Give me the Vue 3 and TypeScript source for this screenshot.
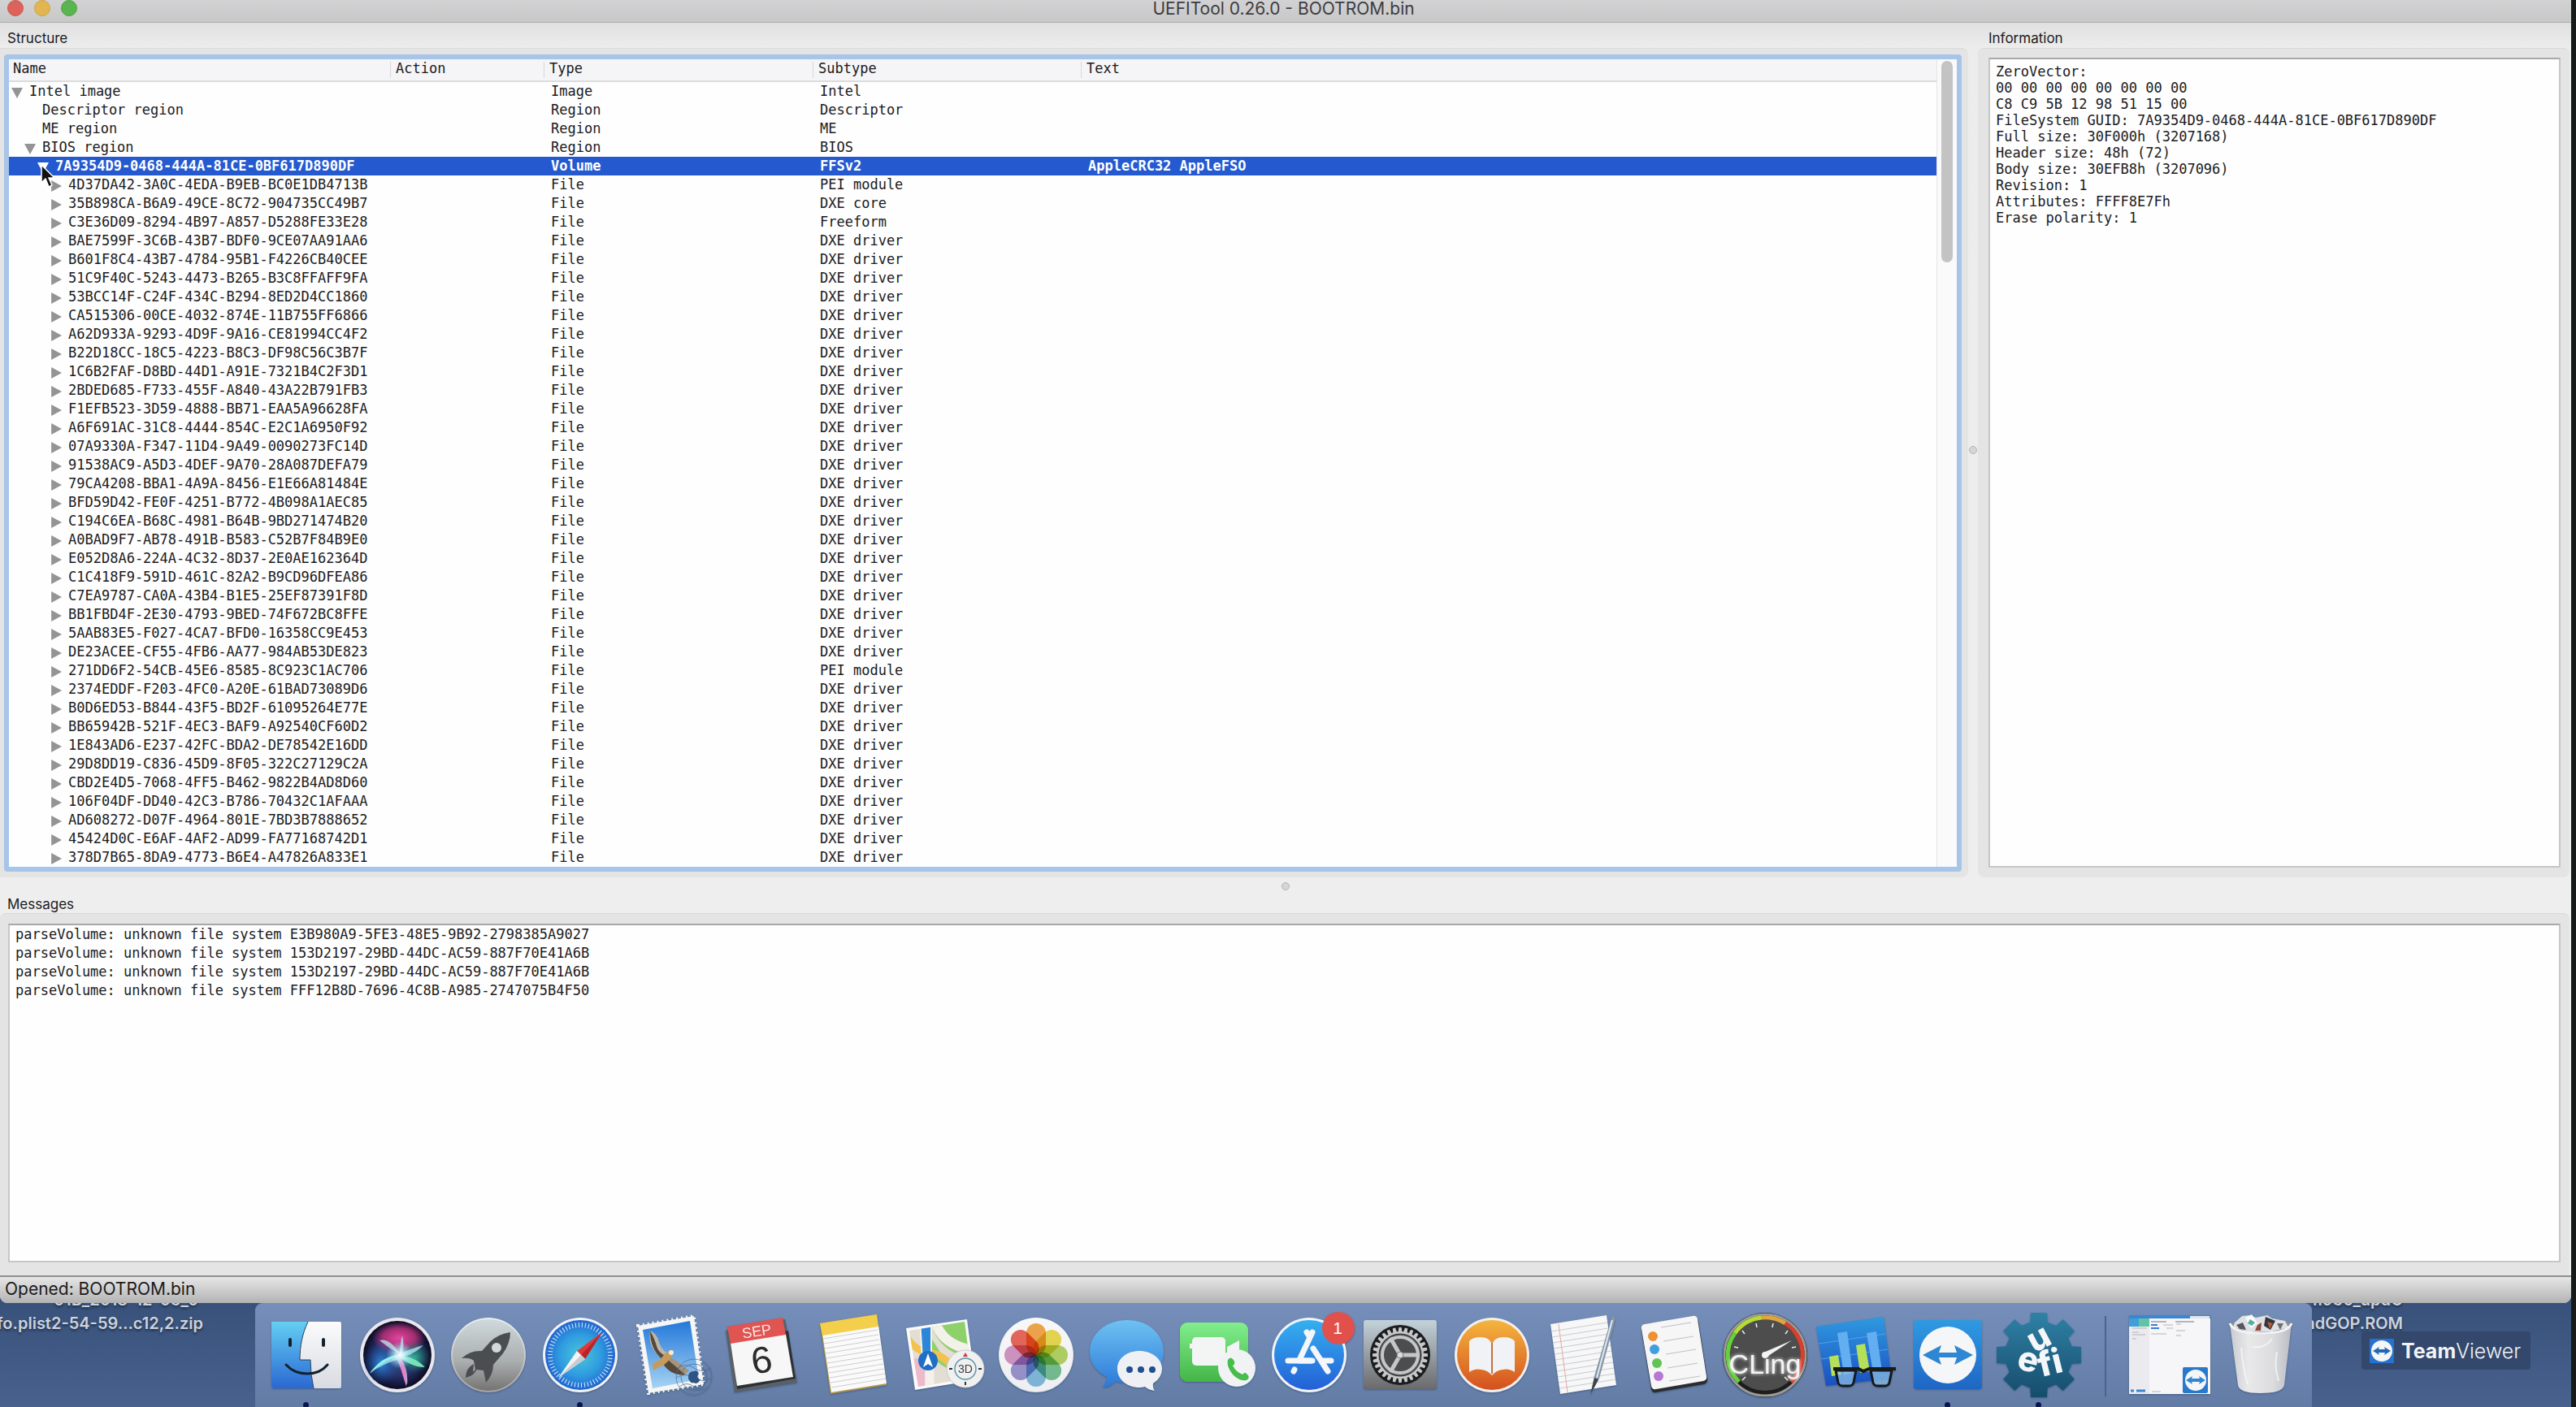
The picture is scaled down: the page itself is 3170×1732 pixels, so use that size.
<script setup lang="ts">
interface TreeRow {
  level: number
  name: string
  type: string
  subtype: string
  text?: string
  state: 'open' | 'closed' | 'leaf'
  selected?: boolean
}

const fileGuids: string[] = [
  '4D37DA42-3A0C-4EDA-B9EB-BC0E1DB4713B',
  '35B898CA-B6A9-49CE-8C72-904735CC49B7',
  'C3E36D09-8294-4B97-A857-D5288FE33E28',
  'BAE7599F-3C6B-43B7-BDF0-9CE07AA91AA6',
  'B601F8C4-43B7-4784-95B1-F4226CB40CEE',
  '51C9F40C-5243-4473-B265-B3C8FFAFF9FA',
  '53BCC14F-C24F-434C-B294-8ED2D4CC1860',
  'CA515306-00CE-4032-874E-11B755FF6866',
  'A62D933A-9293-4D9F-9A16-CE81994CC4F2',
  'B22D18CC-18C5-4223-B8C3-DF98C56C3B7F',
  '1C6B2FAF-D8BD-44D1-A91E-7321B4C2F3D1',
  '2BDED685-F733-455F-A840-43A22B791FB3',
  'F1EFB523-3D59-4888-BB71-EAA5A96628FA',
  'A6F691AC-31C8-4444-854C-E2C1A6950F92',
  '07A9330A-F347-11D4-9A49-0090273FC14D',
  '91538AC9-A5D3-4DEF-9A70-28A087DEFA79',
  '79CA4208-BBA1-4A9A-8456-E1E66A81484E',
  'BFD59D42-FE0F-4251-B772-4B098A1AEC85',
  'C194C6EA-B68C-4981-B64B-9BD271474B20',
  'A0BAD9F7-AB78-491B-B583-C52B7F84B9E0',
  'E052D8A6-224A-4C32-8D37-2E0AE162364D',
  'C1C418F9-591D-461C-82A2-B9CD96DFEA86',
  'C7EA9787-CA0A-43B4-B1E5-25EF87391F8D',
  'BB1FBD4F-2E30-4793-9BED-74F672BC8FFE',
  '5AAB83E5-F027-4CA7-BFD0-16358CC9E453',
  'DE23ACEE-CF55-4FB6-AA77-984AB53DE823',
  '271DD6F2-54CB-45E6-8585-8C923C1AC706',
  '2374EDDF-F203-4FC0-A20E-61BAD73089D6',
  'B0D6ED53-B844-43F5-BD2F-61095264E77E',
  'BB65942B-521F-4EC3-BAF9-A92540CF60D2',
  '1E843AD6-E237-42FC-BDA2-DE78542E16DD',
  '29D8DD19-C836-45D9-8F05-322C27129C2A',
  'CBD2E4D5-7068-4FF5-B462-9822B4AD8D60',
  '106F04DF-DD40-42C3-B786-70432C1AFAAA',
  'AD608272-D07F-4964-801E-7BD3B7888652',
  '45424D0C-E6AF-4AF2-AD99-FA77168742D1',
  '378D7B65-8DA9-4773-B6E4-A47826A833E1',
]

const specialSubtypes: Record<number, string> = { 0: 'PEI module', 1: 'DXE core', 2: 'Freeform', 26: 'PEI module' }

const rows: TreeRow[] = [
  { level: 0, name: 'Intel image', type: 'Image', subtype: 'Intel', state: 'open' },
  { level: 1, name: 'Descriptor region', type: 'Region', subtype: 'Descriptor', state: 'leaf' },
  { level: 1, name: 'ME region', type: 'Region', subtype: 'ME', state: 'leaf' },
  { level: 1, name: 'BIOS region', type: 'Region', subtype: 'BIOS', state: 'open' },
  {
    level: 2,
    name: '7A9354D9-0468-444A-81CE-0BF617D890DF',
    type: 'Volume',
    subtype: 'FFSv2',
    text: 'AppleCRC32 AppleFSO',
    state: 'open',
    selected: true,
  },
  ...fileGuids.map((name, i): TreeRow => ({
    level: 3,
    name,
    type: 'File',
    subtype: specialSubtypes[i] ?? 'DXE driver',
    state: 'closed',
  })),
]

const information = [
  'ZeroVector:',
  '00 00 00 00 00 00 00 00',
  'C8 C9 5B 12 98 51 15 00',
  'FileSystem GUID: 7A9354D9-0468-444A-81CE-0BF617D890DF',
  'Full size: 30F000h (3207168)',
  'Header size: 48h (72)',
  'Body size: 30EFB8h (3207096)',
  'Revision: 1',
  'Attributes: FFFF8E7Fh',
  'Erase polarity: 1',
].join('\n')

const messages: string[] = [
  'E3B980A9-5FE3-48E5-9B92-2798385A9027',
  '153D2197-29BD-44DC-AC59-887F70E41A6B',
  '153D2197-29BD-44DC-AC59-887F70E41A6B',
  'FFF12B8D-7696-4C8B-A985-2747075B4F50',
].map((guid) => `parseVolume: unknown file system ${guid}`)

function gearPath(cx: number, cy: number, outer: number, inner: number, teeth: number, top: number, base: number): string {
  const points: string[] = []
  for (let i = 0; i < teeth; i++) {
    const a = (i / teeth) * Math.PI * 2 - Math.PI / 2
    const corners: [number, number][] = [[-base, inner], [-top, outer], [top, outer], [base, inner]]
    for (const [offset, r] of corners) {
      points.push(`${(cx + Math.cos(a + offset) * r).toFixed(1)} ${(cy + Math.sin(a + offset) * r).toFixed(1)}`)
    }
  }
  return `M${points.join('L')}Z`
}

const uefiGear = gearPath(56, 64, 53, 42, 8, 0.19, 0.26)
const prefsGear = gearPath(56, 64, 34, 29, 28, 0.05, 0.08)

const petals: string[] = ['#f39a2e', '#e8d532', '#a9cf4a', '#63b984', '#6fb4dc', '#8d86c8', '#cf86bd', '#e8503f']
const noteLines: number[] = Array.from({ length: 11 }, (_, i) => i)
const perforations = '2 4'
</script>

<template>
  <div class="screen">
    <main class="window">
      <header class="titlebar">
        <div class="lights">
          <button class="light red" type="button" aria-label="Close"></button>
          <button class="light yellow" type="button" aria-label="Minimise"></button>
          <button class="light green" type="button" aria-label="Zoom"></button>
        </div>
        <h1>UEFITool 0.26.0 - BOOTROM.bin</h1>
      </header>

      <div class="panes">
        <section class="pane structure" aria-label="Structure">
          <h2>Structure</h2>
          <div class="group tree-group">
            <div class="tree">
              <div class="tree-view">
                <table>
                  <colgroup>
                    <col class="col-name" />
                    <col class="col-action" />
                    <col class="col-type" />
                    <col class="col-subtype" />
                    <col />
                  </colgroup>
                  <thead>
                    <tr>
                      <th scope="col">Name</th>
                      <th scope="col">Action</th>
                      <th scope="col">Type</th>
                      <th scope="col">Subtype</th>
                      <th scope="col">Text</th>
                    </tr>
                  </thead>
                  <tbody>
                    <tr v-for="row in rows" :key="row.name" :class="{ selected: row.selected }">
                      <td>
                        <div class="name" :class="'level-' + row.level">
                          <button
                            v-if="row.state !== 'leaf'"
                            class="disclosure"
                            :class="row.state"
                            type="button"
                            :aria-label="row.state === 'open' ? 'Collapse' : 'Expand'"
                          ></button>
                          <span v-else class="disclosure"></span>
                          <span>{{ row.name }}</span>
                          <svg v-if="row.selected" class="pointer" viewBox="0 0 20 30" aria-hidden="true">
                            <path d="M2 1V23L7 18L11 28L15 26L11 17H18Z" fill="#111" stroke="#fff" stroke-width="1.5" />
                          </svg>
                        </div>
                      </td>
                      <td></td>
                      <td>{{ row.type }}</td>
                      <td>{{ row.subtype }}</td>
                      <td>{{ row.text }}</td>
                    </tr>
                  </tbody>
                </table>
              </div>
              <div class="scroll-lane"><div class="thumb"></div></div>
            </div>
          </div>
        </section>

        <div class="splitter vertical"><span class="grip"></span></div>

        <section class="pane information">
          <h2><label for="info">Information</label></h2>
          <div class="group info-group">
            <textarea id="info" readonly :value="information"></textarea>
          </div>
        </section>
      </div>

      <div class="splitter horizontal"><span class="grip"></span></div>

      <section class="messages" aria-label="Messages">
        <h2>Messages</h2>
        <div class="group message-group">
          <ul>
            <li v-for="(message, i) in messages" :key="i">{{ message }}</li>
          </ul>
        </div>
      </section>

      <footer class="status">Opened: BOOTROM.bin</footer>
    </main>

    <div class="desktop">
      <div class="files left-files">
        <p class="peek">01B_2018-12-05_0</p>
        <p class="file-row"><span>fo.plist</span><span>2-54-59…c12,2.zip</span></p>
      </div>

      <nav class="dock" aria-label="Dock">
        <div class="apps">
          <button class="app running" type="button" aria-label="Finder">
            <svg viewBox="0 0 112 129">
              <defs>
                <linearGradient id="finderBlue" x2="0" y2="1"><stop stop-color="#63cff3" /><stop offset="1" stop-color="#2b68d2" /></linearGradient>
                <linearGradient id="paper" x2="0" y2="1"><stop stop-color="#fbfbfc" /><stop offset="1" stop-color="#d8dbe2" /></linearGradient>
              </defs>
              <rect x="13" y="23" width="86" height="82" rx="2" fill="url(#paper)" />
              <path d="M15 23H58C51 38 48 53 48 70H61Q61 88 65 105H15Q13 105 13 103V25Q13 23 15 23Z" fill="url(#finderBlue)" />
              <path d="M58 23C51 38 48 53 48 70H61Q61 88 65 105" fill="none" stroke="#2b3f5c" stroke-width="1" />
              <path d="M36 45V52M77 45V52" stroke="#14202e" stroke-width="4" stroke-linecap="round" />
              <path d="M31 76Q41 87 57 87T82 76" fill="none" stroke="#14202e" stroke-width="3" stroke-linecap="round" />
            </svg>
          </button>

          <button class="app" type="button" aria-label="Siri">
            <svg viewBox="0 0 112 129">
              <defs>
                <radialGradient id="siriBase"><stop stop-color="#3d5a8c" /><stop offset=".6" stop-color="#27316a" /><stop offset="1" stop-color="#0b0b22" /></radialGradient>
                <radialGradient id="siriPink"><stop stop-color="#e8439f" /><stop offset=".6" stop-color="#c03078" stop-opacity=".8" /><stop offset="1" stop-color="#b42a6a" stop-opacity="0" /></radialGradient>
                <radialGradient id="siriBlue"><stop stop-color="#2b8ad8" /><stop offset="1" stop-color="#1c4fa8" stop-opacity="0" /></radialGradient>
                <radialGradient id="siriTeal"><stop stop-color="#2fae94" /><stop offset="1" stop-color="#1f7f6a" stop-opacity="0" /></radialGradient>
                <radialGradient id="siriGlow"><stop stop-color="#fff" /><stop offset=".3" stop-color="#d8fbff" stop-opacity=".8" /><stop offset="1" stop-color="#8df" stop-opacity="0" /></radialGradient>
              </defs>
              <circle cx="56" cy="64" r="46" fill="#e9e7ee" />
              <circle cx="56" cy="64" r="42" fill="url(#siriBase)" />
              <ellipse cx="58" cy="43" rx="33" ry="20" fill="url(#siriPink)" />
              <ellipse cx="36" cy="74" rx="23" ry="27" fill="url(#siriBlue)" />
              <ellipse cx="77" cy="67" rx="20" ry="20" fill="url(#siriTeal)" />
              <path d="M59 63Q46 56 34 46Q47 43 59 63Q59 50 62 40Q65 52 62 61Q76 55 88 52Q78 62 64 66Q76 66 89 79Q74 78 60 68Q70 82 68 101Q62 84 56 70Q40 74 22 86Q34 70 59 63Z" fill="#b9e9f0" opacity=".75" />
              <path d="M59 65Q69 82 67 103Q61 84 57 69Z" fill="#ef7ec6" />
              <path d="M56 66Q40 70 22 87Q36 66 56 64Z" fill="#8af3e8" />
              <path d="M63 66Q78 66 90 79Q76 79 62 69Z" fill="#6de7b2" opacity=".8" />
              <circle cx="59" cy="64" r="17" fill="url(#siriGlow)" />
            </svg>
          </button>

          <button class="app" type="button" aria-label="Launchpad">
            <svg viewBox="0 0 112 129">
              <defs>
                <linearGradient id="launch" x2="0" y2="1"><stop stop-color="#cfd9dc" /><stop offset=".6" stop-color="#a9adae" /><stop offset="1" stop-color="#757372" /></linearGradient>
                <linearGradient id="launchRim" x2="0" y2="1"><stop stop-color="#e9f0f2" /><stop offset="1" stop-color="#a3a3a4" /></linearGradient>
              </defs>
              <circle cx="56" cy="64" r="46" fill="url(#launchRim)" />
              <circle cx="56" cy="64" r="44" fill="url(#launch)" />
              <path d="M83 36Q68 38 58 48L48 59Q34 58 23 68Q33 67 38 71L40 82L50 83L53 98Q62 88 62 76L74 62Q83 49 83 36Z" fill="#4b4e50" />
              <circle cx="66" cy="55" r="6" fill="#d2d9da" />
              <path d="M38 75Q28 80 28 92Q40 89 42 80L37 85Z" fill="#4b4e50" />
            </svg>
          </button>

          <button class="app running" type="button" aria-label="Safari">
            <svg viewBox="0 0 112 129">
              <defs>
                <radialGradient id="safari"><stop stop-color="#49c6d8" /><stop offset=".6" stop-color="#2f9be0" /><stop offset="1" stop-color="#2165cf" /></radialGradient>
              </defs>
              <circle cx="56" cy="64" r="46" fill="#f1f3f6" />
              <circle cx="56" cy="64" r="43" fill="url(#safari)" />
              <circle cx="56" cy="64" r="37" fill="none" stroke="#d9ecf8" stroke-width="6" stroke-dasharray="1 3" />
              <path d="M83 36L52 59L62 69Z" fill="#e0383a" />
              <path d="M83 36L57 64L62 69Z" fill="#b92429" />
              <path d="M29 92L52 59L62 69Z" fill="#f4f4f4" />
              <path d="M29 92L57 64L62 69Z" fill="#c9cdd1" />
            </svg>
          </button>

          <button class="app" type="button" aria-label="Mail">
            <svg viewBox="0 0 112 129">
              <defs>
                <linearGradient id="sky" x2="0" y2="1"><stop stop-color="#2378da" /><stop offset="1" stop-color="#a6d3f2" /></linearGradient>
              </defs>
              <path d="M15 28L84 16L96 100L28 111Z" fill="#f6f6f6" stroke="#f6f6f6" stroke-width="4" :stroke-dasharray="perforations" />
              <path d="M21 33L79 22L90 94L33 105Z" fill="url(#sky)" />
              <path d="M30 34Q38 37 41 48Q43 56 51 62L46 70Q33 60 30 48Q29 40 30 34Z" fill="#bdb6a9" />
              <path d="M30 34Q36 45 38 53T49 65L46 70Q30 58 30 34Z" fill="#57493a" />
              <path d="M51 66Q60 68 66 74L78 83L72 89Q58 89 48 72Z" fill="#a5937c" />
              <path d="M52 70L73 88Q56 90 46 75Z" fill="#57493a" />
              <path d="M54 59Q60 63 55 68Q49 76 43 78L34 83L33 74Q41 72 47 64Q50 59 54 59Z" fill="#c59b5c" />
              <circle cx="56" cy="61" r="3" fill="#f5ead2" />
              <g fill="none" stroke="#506d91" opacity=".75"><circle cx="84" cy="91" r="22" /><circle cx="84" cy="91" r="16" /><path d="M64 80Q74 73 84 80T105 80M62 92Q73 85 84 92T106 92M66 103Q75 96 84 103T102 103" /></g>
              <path d="M84 84C90 82 91 88 88 90Q89 94 92 94Q88 101 84 98Q80 100 77 93Q76 84 84 84Z" fill="#2f5484" />
            </svg>
          </button>

          <button class="app" type="button" aria-label="Calendar">
            <svg viewBox="0 0 112 129">
              <path d="M11 34L84 20L99 98L22 110Z" fill="#596067" />
              <path d="M20 48L88 34L97 93L25 106Z" fill="#2c2f33" />
              <path d="M17 49L85 38L94 91L25 102Z" fill="#f7f7f7" />
              <path d="M13 29L81 18L85 39L17 50Z" fill="#e05452" />
              <text x="49" y="41" text-anchor="middle" transform="rotate(-9 49 34)" class="cal-month">SEP</text>
              <text x="55" y="86" text-anchor="middle" transform="rotate(-9 55 69)" class="cal-day">6</text>
            </svg>
          </button>

          <button class="app" type="button" aria-label="Notes">
            <svg viewBox="0 0 112 129">
              <path d="M15 25L85 14L97 101L28 112Z" fill="#b3954a" />
              <path d="M18 38L87 27L97 99L29 110Z" fill="#fafafa" />
              <path d="M15 25L85 14L87 29L18 40Z" fill="#f4cf4b" />
              <g stroke="#cfcfcf"><path v-for="n in noteLines" :key="n" :d="`M${19 + n} ${44 + n * 6}l67 -11`" /></g>
            </svg>
          </button>

          <button class="app" type="button" aria-label="Maps">
            <svg viewBox="0 0 112 129">
              <defs>
                <clipPath id="mapClip"><path d="M13 34L81 23L90 92L24 103Z" /></clipPath>
              </defs>
              <path d="M9 31L84 20L94 95L20 107Z" fill="#fafafa" />
              <g clip-path="url(#mapClip)">
                <rect x="8" y="18" width="90" height="92" fill="#e3ddd3" />
                <path d="M38 20H90V70L70 62Q45 50 38 20Z" fill="#8ed16b" />
                <path d="M38 40L66 84L52 76L36 62Z" fill="#8ed16b" />
                <path d="M44 20Q52 52 92 58" fill="none" stroke="#f4f1ea" stroke-width="12" />
                <path d="M8 40Q20 60 40 62T84 100" fill="none" stroke="#f3c24e" stroke-width="9" />
                <path d="M12 68H32V110H12Z" fill="#efb9cc" />
                <path d="M38 80V110" stroke="#f4f1ea" stroke-width="11" />
                <path d="M25 20H41V70H28Z" fill="#f4f1ea" />
                <path d="M27 20H39V70H30Z" fill="#2b86d9" />
              </g>
              <circle cx="36" cy="71" r="12" fill="#1f6fc4" />
              <path d="M36 62L42 79L36 75L30 79Z" fill="#fff" />
              <circle cx="82" cy="81" r="23" fill="#f0f0f1" stroke="#c9ccd2" />
              <circle cx="82" cy="81" r="13" fill="none" stroke="#5d95a8" stroke-width="1.5" />
              <path d="M82 61L85 66H79Z" fill="#d23b35" />
              <path d="M62 81H66M98 81H102M82 97V101" stroke="#333" stroke-width="2" />
              <text x="82" y="86" text-anchor="middle" class="map-mode">3D</text>
            </svg>
          </button>

          <button class="app" type="button" aria-label="Photos">
            <svg viewBox="0 0 112 129">
              <circle cx="56" cy="64" r="46" fill="url(#paper)" />
              <circle cx="56" cy="64" r="45" fill="#f7f7f8" opacity=".7" />
              <g class="petals">
                <rect v-for="(colour, i) in petals" :key="i" x="44" y="25" width="24" height="39" rx="12" :fill="colour" :transform="`rotate(${i * 45} 56 64)`" opacity=".85" />
              </g>
            </svg>
          </button>

          <button class="app" type="button" aria-label="Messages">
            <svg viewBox="0 0 112 129">
              <defs><linearGradient id="bubble" x2="0" y2="1"><stop stop-color="#6fc1f2" /><stop offset="1" stop-color="#2b79d8" /></linearGradient></defs>
              <path d="M56 21C82 21 101 38 101 60S82 98 56 98Q47 98 42 96Q36 103 26 104Q31 98 31 91C17 84 10 72 10 60C10 38 30 21 56 21Z" fill="url(#bubble)" />
              <path d="M71 59C87 59 99 69 99 81Q99 92 88 99Q87 104 90 108Q82 107 78 103Q75 104 71 104C56 104 44 94 44 81S56 59 71 59Z" fill="#eef0f4" />
              <g fill="#1f4f8f"><circle cx="59" cy="82" r="4" /><circle cx="73" cy="82" r="4" /><circle cx="87" cy="82" r="4" /></g>
            </svg>
          </button>

          <button class="app" type="button" aria-label="FaceTime">
            <svg viewBox="0 0 112 129">
              <defs><linearGradient id="face" x2="0" y2="1"><stop stop-color="#82ee8e" /><stop offset="1" stop-color="#43b546" /></linearGradient></defs>
              <rect x="9" y="24" width="84" height="73" rx="9" fill="url(#face)" />
              <rect x="24" y="42" width="41" height="35" rx="5" fill="#f3f5f4" />
              <path d="M21 50H26V56H21ZM67 54L82 46V75H67Z" fill="#f3f5f4" />
              <circle cx="79" cy="80" r="23" fill="#f1f2f4" />
              <path d="M68 70Q71 65 75 70Q78 75 74 77Q78 85 86 88Q89 84 92 88Q96 92 91 95Q83 97 74 88Q66 78 68 70Z" fill="#47bd4a" />
            </svg>
          </button>

          <button class="app" type="button" aria-label="App Store">
            <svg viewBox="0 0 112 129">
              <defs><linearGradient id="store" x2="0" y2="1"><stop stop-color="#35b0f0" /><stop offset="1" stop-color="#2360d6" /></linearGradient></defs>
              <circle cx="56" cy="64" r="46" fill="#f1f3f7" />
              <circle cx="56" cy="64" r="43" fill="url(#store)" />
              <g stroke="#f4f6fa" stroke-width="7" stroke-linecap="round">
                <path d="M60 36L44 70M38 82L37 84M53 36L57 42M61 56L79 84M30 71H60M73 71H83" />
                <path d="M44 71H58" />
              </g>
              <circle cx="92" cy="31" r="20" fill="#e2504b" />
              <text x="91" y="38" text-anchor="middle" class="badge">1</text>
            </svg>
          </button>

          <button class="app" type="button" aria-label="System Preferences">
            <svg viewBox="0 0 112 129">
              <defs><linearGradient id="prefs" x2="0" y2="1"><stop stop-color="#c3d2da" /><stop offset="1" stop-color="#6a6a6c" /></linearGradient></defs>
              <rect x="11" y="21" width="90" height="85" rx="3" fill="url(#prefs)" />
              <circle cx="56" cy="64" r="37" fill="#1c1d1f" />
              <path :d="prefsGear" fill="#c5c7c9" />
              <circle cx="56" cy="64" r="26" fill="#55585a" stroke="#2c2d2f" />
              <circle cx="56" cy="64" r="22" fill="#4b4d4f" stroke="#c5c7c9" stroke-width="4" />
              <path d="M56 64H80M56 64L44 43M56 64L44 85" stroke="#c5c7c9" stroke-width="5" />
              <circle cx="56" cy="64" r="4" fill="#d8dadc" stroke="#77797b" />
            </svg>
          </button>

          <button class="app" type="button" aria-label="Books">
            <svg viewBox="0 0 112 129">
              <defs><linearGradient id="books" x2="0" y2="1"><stop stop-color="#f5b53e" /><stop offset="1" stop-color="#d4501f" /></linearGradient></defs>
              <circle cx="56" cy="64" r="46" fill="#f2f0ee" />
              <circle cx="56" cy="64" r="43" fill="url(#books)" />
              <path d="M55 49Q52 42 42 42Q32 42 28 47V85Q35 80 43 82Q51 83 56 89Q61 83 69 82Q77 80 84 85V47Q80 42 70 42Q60 42 57 49V86H55Z" fill="#f1f2f5" />
              <path d="M56 49V87" stroke="#c9703a" stroke-width="2" />
            </svg>
          </button>

          <button class="app" type="button" aria-label="TextEdit">
            <svg viewBox="0 0 112 129">
              <path d="M16 26L85 15L97 101L28 112Z" fill="#f7f7f7" />
              <g stroke="#c6cbd2"><path v-for="n in noteLines" :key="n" :d="`M${17 + n} ${35 + n * 7}l69 -11`" /></g>
              <path d="M26 26L37 110" stroke="#eba6a6" />
              <path d="M91 18Q94 15 96 19L76 93L65 113L70 90Z" fill="#8696a6" />
              <path d="M92 21L73 92" stroke="#dfe9f0" stroke-width="2" />
              <path d="M70 92L65 113L75 94Z" fill="#3c444c" />
            </svg>
          </button>

          <button class="app" type="button" aria-label="Reminders">
            <svg viewBox="0 0 112 129">
              <path d="M20 28L80 19Q85 18 86 23L97 93Q98 98 93 100L34 110Q29 111 28 106L16 34Q15 29 20 28Z" fill="#2c2d30" />
              <path d="M20 26L79 16Q84 15 85 20L96 90Q97 95 92 96L34 106Q29 107 28 102L16 32Q15 27 20 26Z" fill="#f6f6f7" />
              <circle cx="30" cy="41" r="6" fill="#ee9136" /><circle cx="32" cy="57" r="6" fill="#3f9fe0" /><circle cx="35" cy="74" r="6" fill="#63c453" /><circle cx="37" cy="90" r="6" fill="#b678d4" />
              <path d="M40 30L77 24M43 47L80 41M46 63L83 57M48 80L85 74M50 96L88 90" stroke="#c0c0c4" />
            </svg>
          </button>

          <button class="app" type="button" aria-label="CLing">
            <svg viewBox="0 0 112 129">
              <circle cx="56" cy="64" r="52" fill="#1d1d1d" />
              <circle cx="56" cy="64" r="50" fill="none" stroke="#9a9a98" stroke-width="3" />
              <circle cx="56" cy="64" r="44" fill="#4d4d4d" />
              <g fill="none" stroke-width="5">
                <path d="M24 97A46 46 0 0 1 19 37" stroke="#62d33a" />
                <path d="M19 37A46 46 0 0 1 52 18" stroke="#b4dc35" />
                <path d="M52 18A46 46 0 0 1 81 25" stroke="#e2a53a" />
                <path d="M81 25A46 46 0 0 1 88 97" stroke="#d93f2c" />
              </g>
              <path d="M18 54l5 1M28 34l3 4M45 25l1 5M66 25l-1 5M84 34l-3 4M94 54l-5 1M28 95l4 -4M84 95l-4 -4" stroke="#eee" stroke-width="1.5" />
              <path d="M89 46L54 61L57 67Z" fill="#f2f2f2" /><circle cx="56" cy="64" r="4" fill="#f2f2f2" />
              <text x="56" y="87" text-anchor="middle" class="cling">CLing</text>
            </svg>
          </button>

          <button class="app" type="button" aria-label="Power Gadget">
            <svg viewBox="0 0 112 129">
              <defs><linearGradient id="gadget" x2="0" y2="1"><stop stop-color="#2f9ae0" /><stop offset="1" stop-color="#1b4fc0" /></linearGradient></defs>
              <path d="M7 29L90 17L100 93L19 102Z" fill="url(#gadget)" />
              <path d="M10 50L92 38M13 69L95 57" stroke="#4fa3ea" />
              <path d="M33 37L45 35L52 86L41 88ZM69 37L81 35L88 84L77 86Z" fill="#63aef0" />
              <path d="M23 66L34 64L38 88L26 90ZM56 52L67 50L73 84L61 86Z" fill="#b4e05a" />
              <path d="M31 83H56L53 98Q52 102 47 102H40Q35 102 34 98ZM74 83H100L97 98Q96 102 91 102H83Q78 102 77 98Z" fill="#8fc4ea" fill-opacity=".7" stroke="#17191c" stroke-width="3" />
              <path d="M28 81H59L65 84L72 81H105" fill="none" stroke="#17191c" stroke-width="4" />
            </svg>
          </button>

          <button class="app running" type="button" aria-label="TeamViewer">
            <svg viewBox="0 0 112 129">
              <defs><linearGradient id="viewer" x2="0" y2="1"><stop stop-color="#2f9ae2" /><stop offset="1" stop-color="#1f66c4" /></linearGradient></defs>
              <rect x="14" y="21" width="84" height="85" rx="4" fill="url(#viewer)" />
              <circle cx="56" cy="64" r="35" fill="#f5f6f8" />
              <path d="M25 64L48 52L45 61H67L64 52L87 64L64 76L67 67H45L48 76Z" fill="#2f86d2" />
            </svg>
          </button>

          <button class="app running" type="button" aria-label="UEFITool">
            <svg viewBox="0 0 112 129">
              <defs><linearGradient id="gear" x2="0" y2="1"><stop stop-color="#2f81a6" /><stop offset="1" stop-color="#164c6c" /></linearGradient></defs>
              <path :d="uefiGear" fill="url(#gear)" />
              <g class="uefi" text-anchor="middle">
                <text x="57" y="57" transform="rotate(-28 57 46)">u</text>
                <text x="43" y="84" transform="rotate(14 43 71)">e</text>
                <text x="70" y="88" transform="rotate(-14 70 75)">fi</text>
              </g>
            </svg>
          </button>
        </div>

        <span class="divider"></span>

        <div class="tray">
          <button class="app" type="button" aria-label="TeamViewer window">
            <svg viewBox="0 0 112 129">
              <rect x="6" y="15" width="100" height="97" fill="#f6f6f8" />
              <rect x="6" y="15" width="100" height="4" fill="#3a86d4" />
              <rect x="81" y="16" width="24" height="3" fill="#dfe6f0" />
              <rect x="6" y="19" width="25" height="10" fill="#3f9fd8" /><rect x="18" y="19" width="13" height="10" fill="#63c4a4" />
              <rect x="6" y="29" width="25" height="83" fill="#ebebef" />
              <path d="M33 23H52M63 23H86" stroke="#777" />
              <path d="M33 27H41M33 31H43" stroke="#3a7fd6" stroke-width="2" />
              <path d="M10 31H28M10 36H18M10 39H26M10 44H15M33 38H52M64 26H70M48 27H60M52 31H60M64 34H75M64 40H70M34 109H45" stroke="#b3b3bb" />
              <path d="M8 108H12M15 108H26" stroke="#3a86d4" stroke-width="3" />
              <rect x="72" y="79" width="31" height="32" rx="2" fill="#2879cc" />
              <circle cx="88" cy="95" r="13" fill="#f5f6f8" />
              <path d="M76 95L84 90L83 93H93L92 90L100 95L92 100L93 97H83L84 100Z" fill="#2f86d2" />
            </svg>
          </button>
          <button class="app" type="button" aria-label="Trash">
            <svg viewBox="0 0 112 129">
              <defs><linearGradient id="bin" x2="1" y2="0"><stop stop-color="#c9cbcf" /><stop offset=".3" stop-color="#e9e9ea" /><stop offset=".7" stop-color="#dcdcde" /><stop offset="1" stop-color="#b9bcc4" /></linearGradient></defs>
              <ellipse cx="56" cy="27" rx="37" ry="8" fill="#8d9099" />
              <path d="M24 24L33 16L43 15L50 18L64 15L70 19L86 22L90 30L70 35H40L22 30Z" fill="#dfe1e4" />
              <path d="M37 18L45 14L52 25L44 31Z" fill="#fafafa" /><path d="M43 20L49 24L45 28L40 25Z" fill="#4fb0a4" />
              <path d="M62 17L74 22L68 33L60 28Z" fill="#33363c" /><path d="M64 23L71 25L67 32Z" fill="#b35a38" />
              <path d="M52 27L57 24L56 34L49 34Z" fill="#8d4a3a" /><path d="M26 27L34 24L38 33L30 32Z" fill="#55585e" /><path d="M76 25L84 25L80 33Z" fill="#6c6e73" />
              <path d="M18 25Q22 37 56 37T94 25L85 101Q83 111 56 111T28 101Z" fill="url(#bin)" />
              <path d="M18 25Q22 37 56 37T94 25" fill="none" stroke="#f3f3f4" stroke-width="3" />
              <path d="M46 54Q62 56 70 44M32 55Q34 80 40 100M76 60Q72 78 78 96" fill="none" stroke="#f6f6f6" stroke-width="2" opacity=".8" />
            </svg>
          </button>
        </div>
      </nav>

      <div class="files right-files">
        <p class="peek">m950_updG</p>
        <p class="file-row">ndGOP.ROM</p>
        <a class="viewer" href="#teamviewer">
          <svg viewBox="0 0 30 30" aria-hidden="true">
            <rect width="30" height="30" rx="1" fill="#2573cf" />
            <circle cx="15" cy="15" r="13" fill="#f5f6f8" />
            <path d="M4 15L12 10L11 13H19L18 10L26 15L18 20L19 17H11L12 20Z" fill="#2468b4" />
          </svg>
          <span><b>Team</b>Viewer</span>
        </a>
      </div>
    </div>
  </div>
</template>

<style>
body {
  margin: 0;
  background: #161a19;
}
</style>

<style scoped>
.screen {
  display: flex;
  flex-direction: column;
  box-sizing: border-box;
  height: 100vh;
  margin-right: 6px;
  overflow: hidden;
  background: linear-gradient(#365079, #48628e) bottom / 100% 140px no-repeat;
  color: #1b1b1d;
  font-family: Inter, "Liberation Sans", sans-serif;
}
button {
  margin: 0;
  padding: 0;
  border: 0;
  background: none;
}
h1,
h2,
p {
  margin: 0;
  font-weight: 400;
}
.window {
  display: flex;
  flex: 1;
  flex-direction: column;
  min-height: 0;
  overflow: hidden;
  border-radius: 0 0 9px 9px;
  background: #eee;
}
.titlebar {
  display: flex;
  align-items: flex-start;
  box-sizing: border-box;
  height: 28px;
  padding: 0 14px 0 9px;
  border-bottom: 1px solid #adadae;
  background: linear-gradient(#d2d2d4, #c8c8c8);
}
.lights {
  display: flex;
  flex: 1;
  gap: 13px;
}
.titlebar::after {
  content: "";
  flex: 1;
}
.light {
  width: 20px;
  height: 20px;
  border: 1px solid #c75a50;
  border-radius: 50%;
  background: #de6259;
}
.light.yellow {
  border-color: #cfa544;
  background: #e2b551;
}
.light.green {
  border-color: #4ba343;
  background: #5ab550;
}
h1 {
  color: #3d3d40;
  font-size: 21px;
  line-height: 22px;
}
h2 {
  padding-left: 9px;
  font-size: 17px;
  line-height: 22px;
}
.panes {
  display: flex;
  flex: 1;
  min-height: 0;
  background: linear-gradient(#e0e0e0, #ececec 30px, #eee);
}
.pane {
  display: flex;
  flex-direction: column;
  min-width: 0;
  padding-top: 8px;
}
.pane h2 {
  padding-bottom: 1px;
}
.structure {
  flex: 2422;
}
.information {
  flex: 728;
  margin-right: 2px;
}
.information h2 {
  padding-left: 13px;
}
.group {
  display: flex;
  flex: 1;
  box-sizing: border-box;
  min-height: 0;
  border-top: 1px solid #d9d9d9;
  border-radius: 8px;
  background: #e4e4e4;
}
.tree-group {
  padding: 7px 8px 7px 5px;
  border-radius: 0 8px 8px 0;
}
.tree {
  display: flex;
  flex: 1;
  min-width: 0;
  overflow: hidden;
  border: 6px solid #a7c5e9;
  border-radius: 4px;
  background: #fefefe;
}
.tree-view {
  flex: 1;
  min-width: 0;
  overflow: hidden;
}
table {
  width: 100%;
  table-layout: fixed;
  border-spacing: 0;
  font-family: "DejaVu Sans Mono", monospace;
  font-size: 17px;
  line-height: 23px;
  white-space: pre;
}
.col-name {
  width: 469px;
}
.col-action {
  width: 189px;
}
.col-type {
  width: 331px;
}
.col-subtype {
  width: 330px;
}
th {
  height: 23px;
  padding: 0 0 3px 7px;
  border-bottom: 2px solid #dcdcdc;
  background: linear-gradient(#d8d8da, #d8d8da) left center / 1px 20px no-repeat #f5f5f7;
  font-weight: 400;
  text-align: left;
}
th:first-child {
  padding-left: 5px;
  background: #f5f5f7;
}
td {
  height: 23px;
  padding: 0 0 0 9px;
}
td:first-child {
  padding-left: 0;
}
.selected td {
  background: #2459cf;
  color: #fff;
  font-weight: 700;
}
.name {
  display: flex;
  position: relative;
  align-items: center;
}
.level-1 {
  padding-left: 16px;
}
.level-2 {
  padding-left: 32px;
}
.level-3 {
  padding-left: 48px;
}
.disclosure {
  width: 14px;
  height: 14px;
  margin: 3px 8px 0 3px;
}
.disclosure.open {
  background: #949494;
  clip-path: polygon(0 8%, 100% 8%, 50% 100%);
}
.disclosure.closed {
  background: #949494;
  clip-path: polygon(8% 0, 100% 50%, 8% 100%);
}
.selected .disclosure {
  background: #fff;
}
.pointer {
  position: absolute;
  z-index: 1;
  top: 9px;
  left: 38px;
  width: 20px;
  height: 30px;
}
.scroll-lane {
  flex: none;
  box-sizing: border-box;
  width: 25px;
  padding: 2px 5px;
  border-left: 1px solid #e6e6e8;
  background: #fafafb;
}
.thumb {
  width: 14px;
  height: 25%;
  border-radius: 7px;
  background: #c3c3c3;
}
.splitter {
  display: flex;
  flex: none;
  align-items: center;
  justify-content: center;
}
.splitter.vertical {
  width: 12px;
}
.splitter.horizontal {
  height: 22px;
}
.grip {
  box-sizing: border-box;
  width: 10px;
  height: 10px;
  border: 1px solid #b4b4b4;
  border-radius: 50%;
  background: #d6d6d6;
}
.info-group {
  padding: 11px 11px 12px 13px;
}
textarea,
ul {
  flex: 1;
  box-sizing: border-box;
  margin: 0;
  border: 2px solid #c6c6c6;
  border-top-color: #a8a8a8;
  border-radius: 0;
  outline: 0;
  background: #fefefe;
  color: inherit;
  font-family: "DejaVu Sans Mono", monospace;
  font-size: 17px;
}
textarea {
  padding: 5px 7px;
  line-height: 20px;
  resize: none;
}
.messages {
  display: flex;
  flex: none;
  flex-direction: column;
  height: 468px;
  margin-right: 2px;
}
.message-group {
  padding: 12px 11px 16px 10px;
  border-radius: 8px 8px 0 0;
}
ul {
  padding: 0 7px;
  line-height: 23px;
  list-style: none;
}
.status {
  flex: none;
  box-sizing: border-box;
  height: 34px;
  padding-left: 6px;
  border-top: 2px solid #8f8f8f;
  background: linear-gradient(#e6e6e6, #b3b3b3);
  font-size: 21px;
  line-height: 30px;
}
.desktop {
  display: flex;
  flex: none;
  height: 128px;
}
.files {
  flex: none;
  overflow: hidden;
  color: #ced2d9;
  font-size: 20px;
  line-height: 24px;
  text-shadow: 0 2px 3px #1c2c46;
  white-space: nowrap;
}
.files p {
  font-weight: 600;
}
.left-files {
  width: 314px;
}
.peek {
  display: flex;
  align-items: flex-end;
  height: 8px;
}
.left-files .peek {
  padding-left: 66px;
}
.left-files .file-row {
  justify-content: flex-end;
  width: 250px;
}
.file-row {
  display: flex;
  padding-top: 5px;
}
.right-files {
  width: 319px;
}
.right-files p {
  justify-content: flex-end;
  width: 112px;
}
.dock {
  display: flex;
  flex: 1;
  min-width: 0;
  padding: 0 7px;
  border-radius: 9px 9px 0 0;
  background: linear-gradient(#758fba, #627ca6);
}
.apps {
  display: grid;
  flex: 1;
  grid-template-columns: repeat(20, 1fr);
  min-width: 0;
}
.app {
  display: flex;
  position: relative;
  justify-content: center;
}
.app svg {
  width: 112px;
  height: 129px;
  filter: drop-shadow(0 1px 1px #2b416688);
}
.running::after {
  content: "";
  position: absolute;
  bottom: 0;
  left: 50%;
  width: 7px;
  height: 7px;
  margin-left: -4px;
  border-radius: 50%;
  background: #0a1650;
}
.divider {
  width: 2px;
  height: 99px;
  margin: 16px 22px 0 25px;
  background: #48648f;
}
.tray {
  display: flex;
}
.petals rect {
  mix-blend-mode: multiply;
}
.cal-month {
  fill: #f6e7e6;
  font-size: 18px;
}
.cal-day {
  fill: #2c2c2e;
  font-size: 46px;
  font-weight: 300;
}
.map-mode {
  fill: #3c3f42;
  font-size: 14px;
}
.badge {
  fill: #fff;
  font-size: 21px;
}
.cling {
  fill: #f4f4f4;
  font-family: "Liberation Sans", sans-serif;
  font-size: 34px;
  filter: drop-shadow(0 0 2px #fff);
}
.uefi {
  fill: #f4f7f9;
  font-family: Inter, sans-serif;
  font-size: 42px;
  font-weight: 800;
}
.viewer {
  display: flex;
  align-items: center;
  gap: 9px;
  box-sizing: border-box;
  width: 208px;
  height: 47px;
  margin: -2px 0 0 61px;
  padding: 0 10px;
  border-radius: 4px;
  background: #33486c;
  color: #f1f3f6;
  font-size: 25px;
  font-weight: 300;
  text-decoration: none;
  text-shadow: none;
}
.viewer svg {
  flex: none;
  width: 30px;
  height: 30px;
}
.viewer b {
  font-weight: 700;
}
</style>
